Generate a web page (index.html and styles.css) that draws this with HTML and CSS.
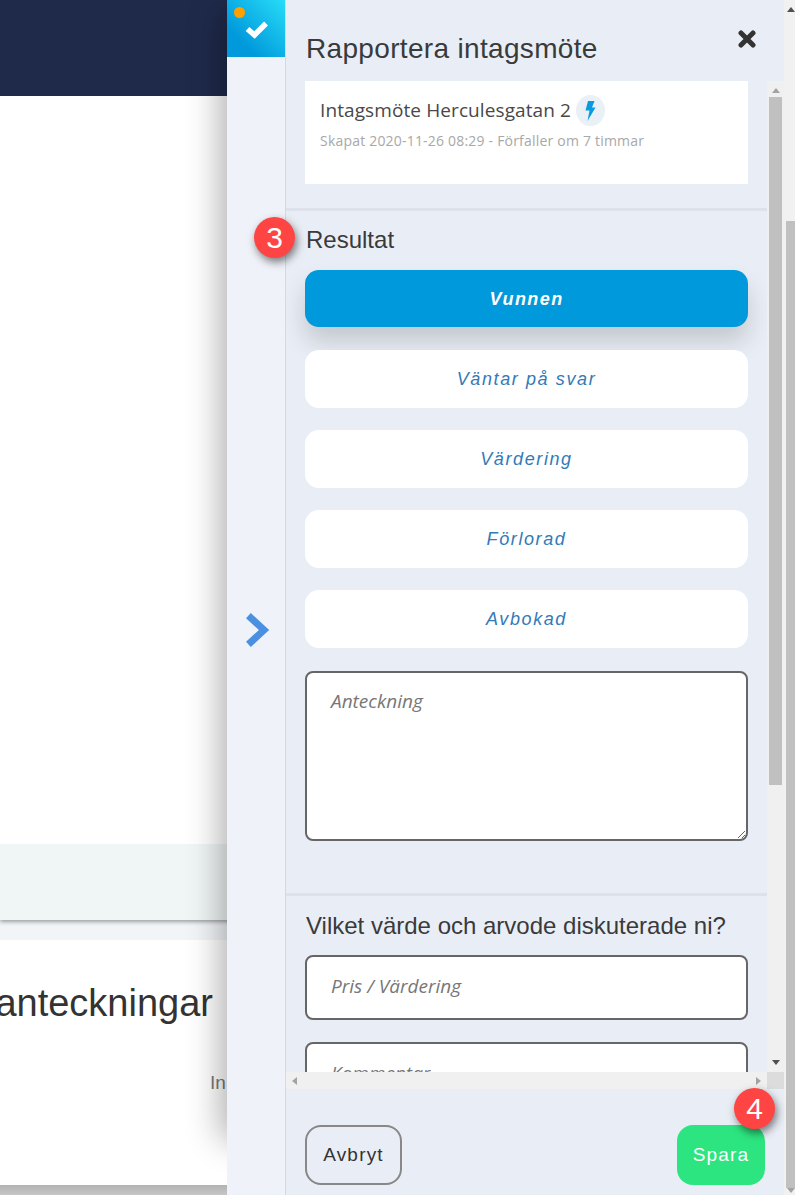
FILE: index.html
```html
<!DOCTYPE html>
<html lang="sv">
<head>
<meta charset="utf-8">
<title>Rapportera intagsmöte</title>
<link rel="stylesheet" href="styles.css">
</head>
<body>
<div class="page">
  <header class="topbar"></header>
  <div class="hero"></div>
  <div class="band"></div>
  <section class="notes">
    <h2 class="notes-title">anteckningar</h2>
    <p class="notes-empty">In</p>
  </section>
  <div class="page-end"></div>
</div>

<div class="panel-shadow"></div>

<aside class="panel">
  <nav class="rail">
    <div class="tile">
      <span class="dot"></span>
      <svg class="check" width="24" height="20" viewBox="0 0 24 20"><polyline points="2.5,10 9.5,16 21,4.5" fill="none" stroke="#fff" stroke-width="5.5"/></svg>
    </div>
    <svg class="chevron" width="26" height="36" viewBox="0 0 26 36"><polyline points="5,6 18,18 5,30" fill="none" stroke="#4a90e2" stroke-width="7" stroke-linecap="square"/></svg>
  </nav>

  <div class="content">
    <div class="head">
      <h1 class="title">Rapportera intagsmöte</h1>
      <svg class="close" width="18" height="18" viewBox="0 0 18 18"><path d="M3 3L15 15M15 3L3 15" fill="none" stroke="#333" stroke-width="5" stroke-linecap="round"/></svg>
    </div>

    <div class="middle">
      <div class="scroller">
        <div class="card">
          <div class="card-title">Intagsmöte Herculesgatan 2
            <span class="bolt-wrap"><svg width="11" height="20" viewBox="0 0 11 20"><polygon points="3,0 9.5,0 7,6.5 10.5,6.5 2.5,20 4.5,9.5 0.5,9.5" fill="#0a9ae0"/></svg></span>
          </div>
          <div class="card-sub">Skapat 2020-11-26 08:29 - Förfaller om 7 timmar</div>
        </div>

        <hr class="rule rule-first">
        <h3 class="section section-result">Resultat</h3>
        <div class="choices">
          <button class="choice choice-on">Vunnen</button>
          <button class="choice">Väntar på svar</button>
          <button class="choice">Värdering</button>
          <button class="choice">Förlorad</button>
          <button class="choice">Avbokad</button>
        </div>
        <textarea class="field note" placeholder="Anteckning"></textarea>
        <hr class="rule rule-second">
        <h3 class="section section-value">Vilket värde och arvode diskuterade ni?</h3>
        <input class="field line" placeholder="Pris / Värdering">
        <input class="field line line-next" placeholder="Kommentar">
      </div>

      <div class="vbar">
        <span class="arrow up light"></span>
        <div class="vthumb"></div>
        <span class="arrow down dark"></span>
      </div>
    </div>

    <div class="hbar">
      <div class="htrack">
        <span class="arrow left"></span>
        <span class="arrow right"></span>
      </div>
      <div class="corner"></div>
    </div>

    <div class="actions">
      <button class="btn btn-cancel">Avbryt</button>
      <button class="btn btn-save">Spara</button>
    </div>
  </div>

  <div class="outerbar">
    <span class="arrow up dark outer-up"></span>
    <div class="outer-thumb"></div>
    <span class="arrow down light outer-down"></span>
  </div>

  <span class="badge badge-three">3</span>
  <span class="badge badge-four">4</span>
</aside>
</body>
</html>
```

FILE: styles.css
```css
* { box-sizing: border-box; }
html, body { margin: 0; height: 100%; overflow: hidden; background: #fff; }
body { font-family: "Liberation Sans", Arial, sans-serif; color: #333; }

/* underlying page */
.page { width: 100%; height: 1195px; display: flex; flex-direction: column; background: #f2f5f8; overflow: hidden; }
.topbar { height: 96px; background: #1f2a4b; flex: none; }
.hero { height: 748px; background: #fff; flex: none; position: relative; z-index: 1; }
.band { height: 76px; background: #f0f5f5; flex: none; box-shadow: 0 2px 4px rgba(0,0,0,.35); }
.notes { margin-top: 20px; height: 245px; background: #fff; flex: none; padding-top: 43px; }
.notes-title { margin: 0; width: 213px; display: flex; justify-content: flex-end; font-size: 38px; line-height: 40px; font-weight: 400; color: #333; }
.notes-empty { margin: 50px 0 0 210px; font-size: 19px; line-height: 20px; color: #777; }
.page-end { flex: 1; background: linear-gradient(#b2b2b2, #c6c6c6); }

.panel-shadow { position: absolute; z-index: 2; left: 227px; top: 10px; width: 100px; height: 1130px; box-shadow: -6px 0 32px rgba(0,0,0,.32); }

/* panel */
.panel { position: absolute; z-index: 3; top: 0; right: 0; bottom: 0; width: 568px; display: flex; background: #e9eef6; }
.rail { width: 59px; flex: none; background: #eff2f8; border-right: 1px solid #d6d9df; display: flex; flex-direction: column; align-items: flex-start; }
.tile { position: relative; width: 58px; height: 57px; flex: none; display: flex; align-items: center; justify-content: center; background: linear-gradient(45deg, #0099db 25%, #27dcf8 100%); }
.dot { position: absolute; left: 7px; top: 7px; width: 11px; height: 11px; border-radius: 50%; background: #ff9f00; }
.check { margin: 1px 0 0 2px; }
.chevron { margin: 555px 0 0 19px; }

.content { width: 498px; flex: none; display: flex; flex-direction: column; }
.head { height: 81px; flex: none; display: flex; justify-content: space-between; padding: 30px 28px 0 20px; }
.title { margin: 0; font-size: 28px; line-height: 37px; font-weight: 400; letter-spacing: .33px; color: #3a3a3a; }

.middle { flex: none; height: 991px; display: flex; }
.scroller { width: 481px; height: 991px; overflow: hidden; padding: 0 19px; flex: none; }
.card { height: 103px; background: #fff; margin: 0; padding: 14px 15px 0; }
.card-title { display: flex; align-items: center; gap: 5px; font-family: "Open Sans", sans-serif; font-size: 19px; line-height: 31px; letter-spacing: .1px; color: #484848; }
.bolt-wrap { width: 29px; height: 31px; border-radius: 50%; background: #e9f0f6; display: flex; align-items: center; justify-content: center; }
.card-sub { font-family: "Open Sans", sans-serif; font-size: 14px; line-height: 18px; letter-spacing: .2px; margin-top: 6px; color: #a8a8a8; white-space: nowrap; }

.rule { height: 3px; border: 0; background: #dce1ea; margin: 0 -19px; }
.rule-first { margin-top: 24px; }
.rule-second { margin-top: 52px; }

.section { margin: 0 0 0 1px; font-weight: 400; color: #3a3a3a; font-size: 24px; line-height: 28px; height: 59px; white-space: nowrap; }
.section-result { padding-top: 15px; }
.section-value { padding-top: 16px; }

.choices { display: flex; flex-direction: column; gap: 22px; }
.choice { height: 58px; border: 0; border-radius: 14px; background: #fff; font-family: "Liberation Sans", sans-serif; font-style: italic; font-size: 18px; letter-spacing: 1.6px; color: #337ab7; padding: 1px 0 0; }
.choice-on { height: 57px; margin-bottom: 1px; padding-top: 2px; background: #0099db; color: #fff; font-weight: 700; letter-spacing: 1.4px; box-shadow: 0 15px 25px rgba(0,0,0,.16); }

.field { display: block; width: 100%; background: #fff; border: 2px solid #666; border-radius: 8px; font-family: "Open Sans", sans-serif; font-style: italic; font-size: 19px; padding: 0 24px; outline: 0; color: #333; }
.field::placeholder { color: #777; opacity: 1; }
.note { height: 170px; margin-top: 23px; padding-top: 15px; resize: vertical; line-height: 26px; }
.line { height: 65px; padding-bottom: 4px; }
.line-next { margin-top: 22px; }

/* fake scrollbars */
.vbar { width: 17px; flex: none; background: #f0f0f0; display: flex; flex-direction: column; align-items: center; padding: 0; }
.vthumb { width: 13px; height: 688px; background: #c0c0c0; margin-top: 4px; }
.arrow { display: block; width: 0; height: 0; border-style: solid; border-color: transparent; }
.arrow.up { border-width: 0 4px 5px; margin-top: 7px; }
.arrow.down { border-width: 5px 4px 0; margin-top: auto; margin-bottom: 7px; }
.arrow.up.light { border-bottom-color: #a3a3a3; }
.arrow.up.dark { border-bottom-color: #505050; }
.arrow.down.dark { border-top-color: #505050; }
.arrow.down.light { border-top-color: #a3a3a3; }
.arrow.left { border-width: 4px 5px 4px 0; border-right-color: #a3a3a3; }
.arrow.right { border-width: 4px 0 4px 5px; border-left-color: #a3a3a3; }

.hbar { height: 17px; flex: none; display: flex; }
.htrack { width: 481px; background: #f0f0f0; display: flex; align-items: center; justify-content: space-between; padding: 0 6px; }
.corner { width: 17px; background: #dcdcdc; }

.actions { flex: 1; display: flex; justify-content: space-between; align-items: flex-start; padding: 36px 19px 0; }
.btn { height: 60px; border-radius: 16px; font-family: "Liberation Sans", sans-serif; font-size: 19px; letter-spacing: 1.2px; padding: 0; }
.btn-cancel { width: 97px; background: transparent; border: 2px solid #888; color: #333; }
.btn-save { width: 88px; background: #2de580; border: 0; color: #fff; }

.outerbar { width: 11px; flex: none; background: #f1f1f1; display: flex; flex-direction: column; align-items: flex-end; }
.outer-up { margin: 6px 0 0; }
.outer-thumb { width: 9px; height: 967px; margin-top: 209px; background: #c0c0c0; flex: none; }
.outer-down { margin: auto 0 0; }

/* numbered badges */
.badge { position: absolute; width: 41px; height: 41px; border-radius: 50%; background: #ff4444; color: #fff; display: flex; align-items: center; justify-content: center; font-size: 30px; box-shadow: 2px 4px 8px rgba(0,0,0,.5); }
.badge-three { left: 27px; top: 217px; }
.badge-four { left: 507px; top: 1088px; }
```
